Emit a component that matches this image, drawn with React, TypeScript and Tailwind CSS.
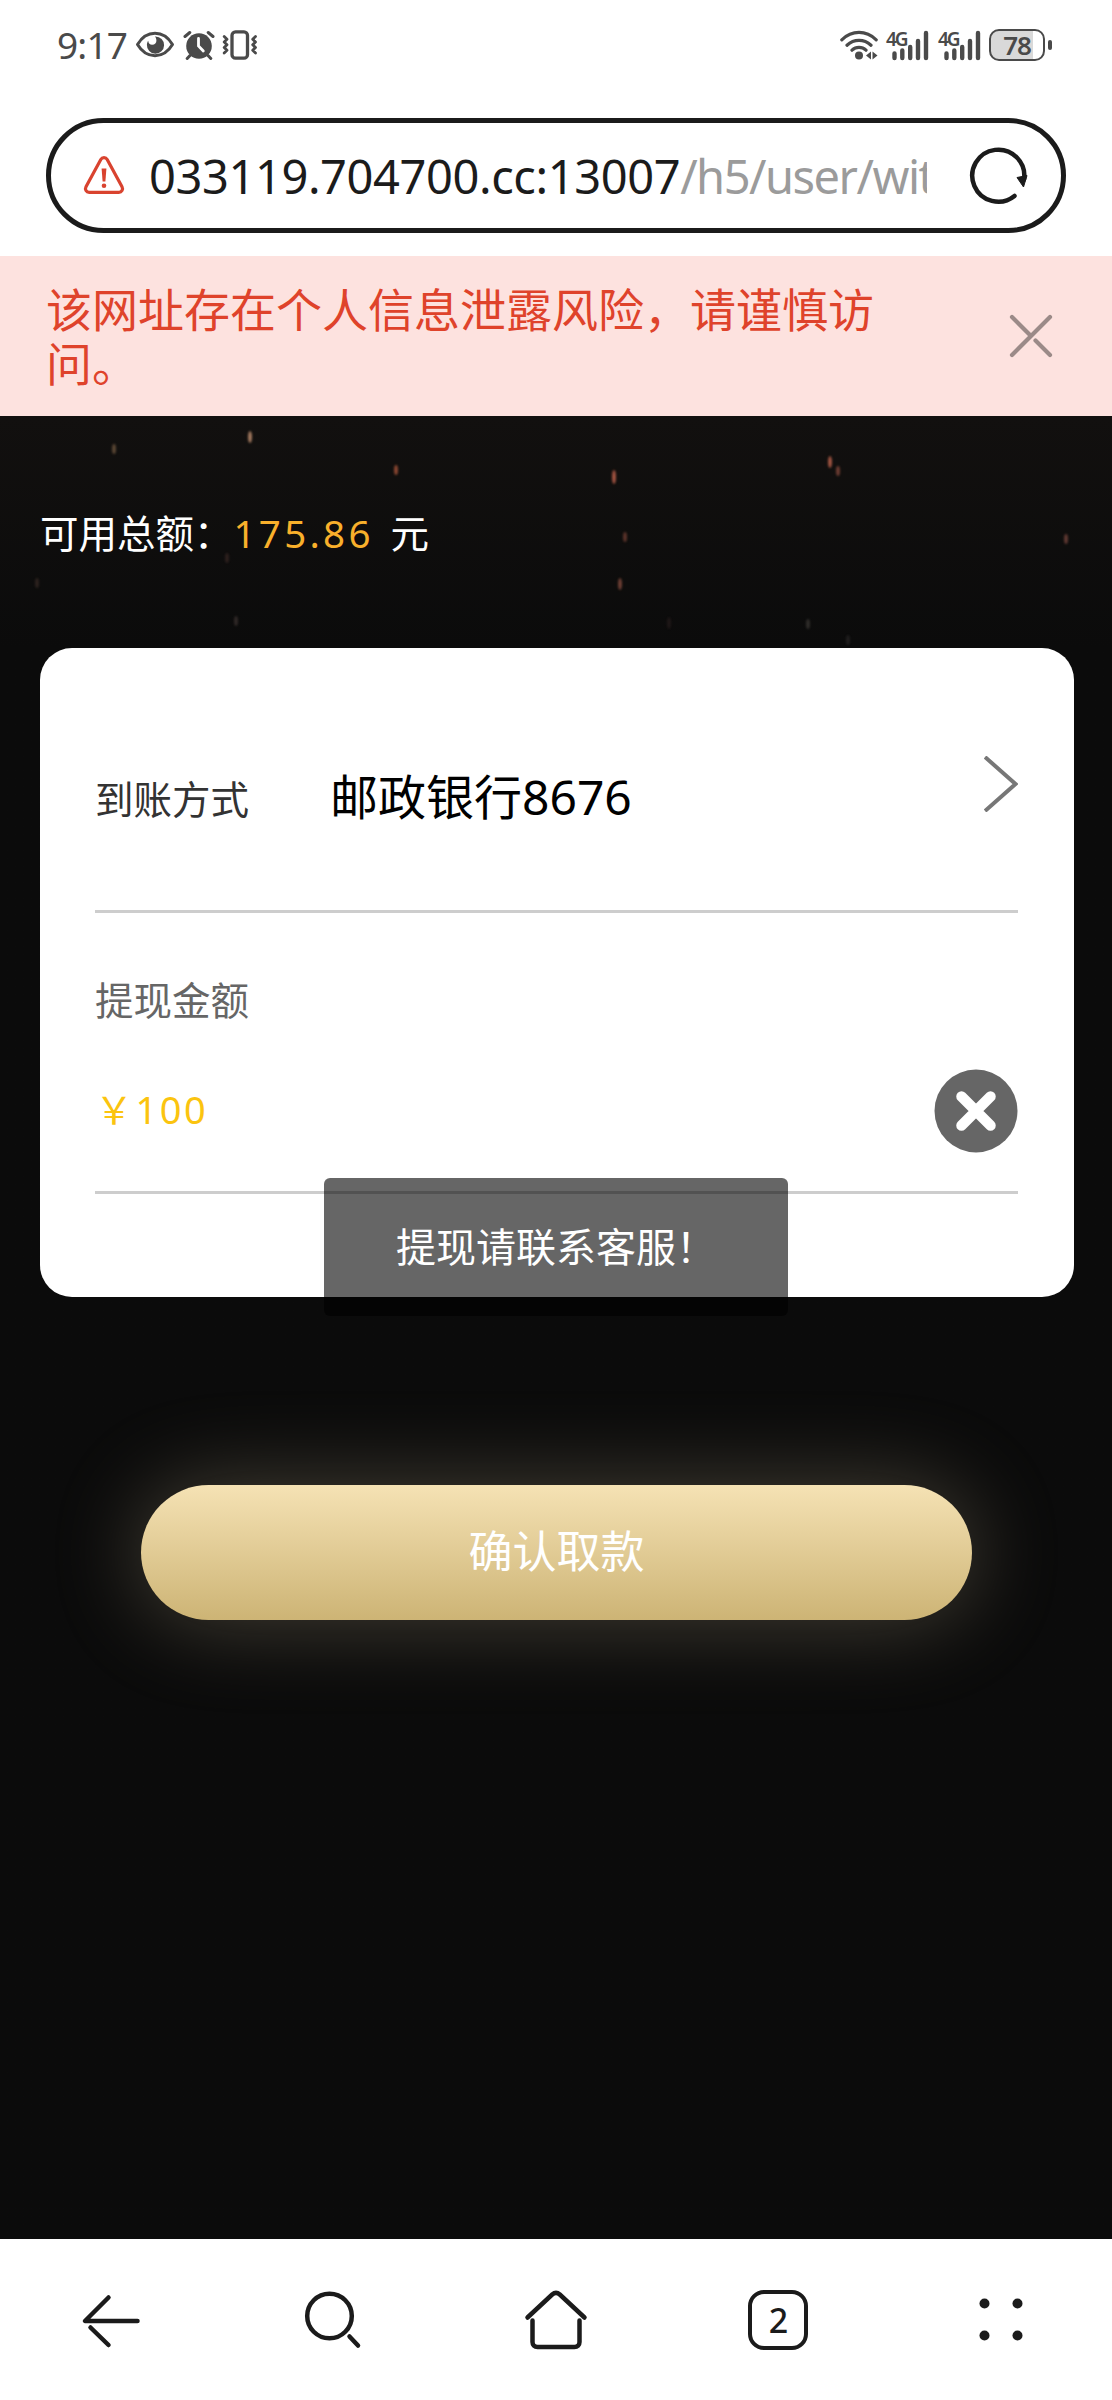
const sparks = [
  { x: 114, y: 33, r: 5, color: "#8a6a4c", opacity: 0.6 },
  { x: 250, y: 21, r: 6, color: "#b98a6c", opacity: 0.85 },
  { x: 396, y: 54, r: 5, color: "#b0583c", opacity: 0.75 },
  { x: 227, y: 142, r: 5, color: "#5c3a34", opacity: 0.4 },
  { x: 37, y: 167, r: 5, color: "#5c4038", opacity: 0.4 },
  { x: 236, y: 205, r: 5, color: "#5a4a46", opacity: 0.45 },
  { x: 614, y: 61, r: 7, color: "#bb5f48", opacity: 0.85 },
  { x: 625, y: 121, r: 5, color: "#8d4c3c", opacity: 0.6 },
  { x: 620, y: 168, r: 6, color: "#a05a48", opacity: 0.65 },
  { x: 669, y: 207, r: 6, color: "#4a3030", opacity: 0.3 },
  { x: 830, y: 46, r: 6, color: "#b8604a", opacity: 0.85 },
  { x: 838, y: 55, r: 5, color: "#a85a48", opacity: 0.6 },
  { x: 808, y: 208, r: 5, color: "#5a5450", opacity: 0.45 },
  { x: 848, y: 224, r: 5, color: "#3c3838", opacity: 0.4 },
  { x: 1066, y: 123, r: 5, color: "#94544a", opacity: 0.6 },
];

const EyeIcon = () => (
  <svg width="40" height="30" viewBox="0 0 40 30" fill="none">
    <path
      d="M2.5 14.5C7 7 13 3.3 20 3.3S33 7 37.5 14.5C33 22 27 25.7 20 25.7S7 22 2.5 14.5Z"
      stroke="#4a4a4a"
      strokeWidth="3"
      strokeLinejoin="round"
    />
    <path
      d="M20.5 6.5a8.6 8.6 0 1 1-8.6 8.2c.1-1.6.6-3 1.3-4 .2 2.4 1.7 4 3.9 4 2.8 0 4.4-2 4.3-4.3-.1-1.5-.5-2.8-1.5-3.9Z"
      fill="#4a4a4a"
    />
  </svg>
);

const AlarmIcon = () => (
  <svg width="32" height="30" viewBox="0 0 32 30" fill="none">
    <circle cx="16" cy="16" r="12.8" fill="#4a4a4a" />
    <path
      d="M2 6.5 6.8 2.5M30 6.5 25.2 2.5M7 25.5 4.2 28.5M25 25.5 27.8 28.5"
      stroke="#4a4a4a"
      strokeWidth="3"
      strokeLinecap="round"
    />
    <path
      d="M15.5 8.5v7.5l4.8 5"
      stroke="#fff"
      strokeWidth="2.8"
      strokeLinecap="round"
    />
  </svg>
);

const VibrateIcon = () => (
  <svg width="36" height="30" viewBox="0 0 36 30" fill="none" stroke="#4a4a4a">
    <rect x="10" y="1.8" width="15.5" height="26.4" rx="3.5" strokeWidth="3.3" />
    <path
      d="M2.2 6.5 5 9.2 2.2 12 5 14.7 2.2 17.5 5 20.3 2.2 23M33.5 6.5 30.7 9.2 33.5 12 30.7 14.7 33.5 17.5 30.7 20.3 33.5 23"
      strokeWidth="2.8"
      strokeLinecap="round"
      strokeLinejoin="round"
    />
  </svg>
);

const WifiIcon = () => (
  <svg width="38" height="31" viewBox="0 0 38 31" fill="none">
    <path
      d="M1.8 9.8C12 0 26 0 36.2 9.8M7 15.2c7-6.4 17-6.4 24 0M12 20.2c4-3.8 10-3.8 14 0"
      stroke="#4a4a4a"
      strokeWidth="3.2"
      strokeLinecap="round"
    />
    <circle cx="19" cy="25.5" r="4" fill="#4a4a4a" />
    <path d="M31 21.5v8l-5-4ZM32.5 21.5v8l5-4Z" fill="#4a4a4a" />
  </svg>
);

const SignalIcon = () => (
  <div className="relative h-[31px] w-[44px]">
    <span className="absolute -top-[2px] left-0 text-[19px] leading-[22px] font-semibold tracking-[-2px] text-[#4a4a4a]">
      4G
    </span>
    <svg
      className="absolute top-0 left-[6px]"
      width="37"
      height="31"
      viewBox="0 0 37 31"
      stroke="#4a4a4a"
      strokeWidth="4.4"
      strokeLinecap="round"
    >
      <path d="M2.5 23.5V28M10.3 20.5V28M18.2 17V28M26 11V28M34 3V28" />
    </svg>
  </div>
);

const Battery = () => (
  <div className="flex items-center gap-[3px]">
    <div className="flex h-[32px] w-[56px] items-center justify-center rounded-[10px] border-[2.5px] border-[#4a4a4a] bg-linear-to-r from-[#d9d9d9] from-80% to-white to-80% text-[26px] leading-[26px] font-semibold tracking-[-1px] text-[#4a4a4a]">
      78
    </div>
    <div className="h-[10px] w-[4px] rounded-full bg-[#4a4a4a]" />
  </div>
);

const StatusBar = () => (
  <div className="flex h-[90px] items-center justify-between pr-[60px] pl-[57px]">
    <div className="flex items-center text-[#4a4a4a]">
      <span className="w-[78px] text-[37px] leading-[40px] tracking-[-0.8px]">9:17</span>
      <EyeIcon />
      <div className="ml-[8px]">
        <AlarmIcon />
      </div>
      <div className="ml-[7px]">
        <VibrateIcon />
      </div>
    </div>
    <div className="flex items-center">
      <WifiIcon />
      <div className="ml-[8px] flex gap-[8px]">
        <SignalIcon />
        <SignalIcon />
      </div>
      <div className="ml-[7px]">
        <Battery />
      </div>
    </div>
  </div>
);

const AddressBar = () => (
  <div className="h-[166px] px-[46px] pt-[28px]">
    <div className="flex h-[115px] items-center rounded-full border-[5px] border-[#1b1b1b] pr-[32px] pl-[32px]">
      <svg width="42" height="42" viewBox="0 0 42 42" fill="none">
        <path
          d="M17.8 4.5a3.7 3.7 0 0 1 6.4 0L39 31.8c1.4 2.7-.2 5.5-3.2 5.5H6.2c-3 0-4.6-2.8-3.2-5.5Z"
          stroke="#d9432f"
          strokeWidth="3.2"
        />
        <path d="M18.6 13.5h4.8l-1 13h-2.8Z" fill="#d9432f" />
        <circle cx="21" cy="30.8" r="2.3" fill="#d9432f" />
      </svg>
      <div className="ml-[24px] w-[778px] overflow-hidden text-[47px] leading-[64px] tracking-[-0.4px] whitespace-nowrap text-[#1b1b1b]">
        033119.704700.cc:13007
        <span className="tracking-[-1.5px] text-[#9b9b9b]">/h5/user/wit</span>
      </div>
      <svg className="ml-auto" width="60" height="60" viewBox="0 0 60 60" fill="none">
        <path
          d="M45.5 50A26 26 0 1 1 55 33.5"
          stroke="#1b1b1b"
          strokeWidth="4.5"
          strokeLinecap="round"
        />
        <path d="M48 31.5 58 29.5 54.5 41Z" fill="#1b1b1b" stroke="#1b1b1b" strokeLinejoin="round" />
      </svg>
    </div>
  </div>
);

const RiskBanner = () => (
  <div className="flex h-[160px] items-center justify-between bg-[#fde2df] pr-[59px] pl-[46px]">
    <p className="w-[850px] text-[46px] leading-[54px] text-[#df432b]">
      该网址存在个人信息泄露风险，请谨慎访问。
    </p>
    <svg width="44" height="44" viewBox="0 0 44 44" stroke="#9b8a88" strokeWidth="4.2" strokeLinecap="round">
      <path d="M3 3 22 22M26.5 26.5 41 41M41 3 3 41" />
    </svg>
  </div>
);

const Sparks = () => (
  <svg className="absolute top-0 left-0" width="1112" height="232" viewBox="0 0 1112 232">
    <defs>
      <filter id="soft" x="-100%" y="-100%" width="300%" height="300%">
        <feGaussianBlur stdDeviation="1" />
      </filter>
    </defs>
    {sparks.map((s) => (
      <ellipse
        key={`${s.x}-${s.y}`}
        cx={s.x}
        cy={s.y}
        rx="2"
        ry={s.r}
        fill={s.color}
        opacity={s.opacity}
        filter="url(#soft)"
      />
    ))}
  </svg>
);

const WithdrawCard = () => (
  <div className="relative mr-[38px] ml-[40px] h-[649px] rounded-[32px] bg-white pr-[56px] pl-[55px]">
    <div className="flex h-[265px] items-center border-b-[3px] border-[#cdcdcd]">
      <span className="w-[235px] pt-[39px] text-[38.5px] leading-[48px] text-[#333]">到账方式</span>
      <span className="pt-[36px] text-[48px] leading-[60px] text-black">邮政银行8676</span>
      <svg className="mt-[9px] ml-auto" width="34" height="56" viewBox="0 0 34 56" fill="none">
        <path d="M1 1 31.5 28 1 55" stroke="#777" strokeWidth="4" />
      </svg>
    </div>
    <div className="h-[281px] border-b-[3px] border-[#cdcdcd] pt-[63px]">
      <p className="text-[38.5px] leading-[48px] text-[#666]">提现金额</p>
      <div className="mt-[45px] flex h-[84px] items-center justify-between">
        <span className="pb-[5px] text-[38px] leading-[48px] tracking-[2.5px] text-[#fbc40f]">￥100</span>
        <svg width="84" height="84" viewBox="0 0 84 84">
          <circle cx="42" cy="42" r="41.5" fill="#666" />
          <path d="M27.5 27.5 56.5 56.5M56.5 27.5 27.5 56.5" stroke="#fff" strokeWidth="10.5" strokeLinecap="round" />
        </svg>
      </div>
    </div>
    {/* toast */}
    <div className="absolute top-[530px] left-[284px] flex h-[138px] w-[464px] items-center justify-center rounded-[6px] bg-black/60 text-[40px] leading-[48px] text-white">
      提现请联系客服！
    </div>
  </div>
);

const TabBar = () => (
  <div className="grid h-[161px] grid-cols-5 items-center justify-items-center bg-white">
    <svg width="64" height="64" viewBox="0 0 64 64" stroke="#1b1b1b" strokeWidth="4.5" strokeLinecap="round" strokeLinejoin="round" fill="none">
      <path d="M29.5 9.5 6 33H58.5M11.5 39.5 29.5 57" />
    </svg>
    <svg width="64" height="64" viewBox="0 0 64 64" stroke="#1b1b1b" strokeWidth="4.5" strokeLinecap="round" fill="none">
      <circle cx="27.5" cy="28" r="22.3" />
      <path d="M47.5 48.5 56 57.5" />
    </svg>
    <svg width="64" height="64" viewBox="0 0 64 64" stroke="#1b1b1b" strokeWidth="4.5" strokeLinecap="round" fill="none">
      <path d="M3.5 29.5 28.2 6.5c2.3-2 5.3-2 7.6 0L60.5 29.5" />
      <path d="M8.5 32.5V54c0 3 2 5 5 5h37c3 0 5-2 5-5V32.5" />
    </svg>
    <div className="flex h-[60px] w-[60px] items-center justify-center rounded-[16px] border-[4.5px] border-[#1b1b1b] text-[34px] leading-[40px] font-medium text-[#1b1b1b]">
      2
    </div>
    <svg width="64" height="64" viewBox="0 0 64 64" fill="#1b1b1b">
      <circle cx="15.5" cy="15.5" r="5" />
      <circle cx="48.5" cy="15.5" r="5" />
      <circle cx="15.5" cy="47.5" r="5" />
      <circle cx="48.5" cy="47.5" r="5" />
    </svg>
  </div>
);

export default function App() {
  return (
    <div className="flex h-[2400px] w-[1112px] flex-col overflow-hidden bg-white font-['Noto_Sans','Noto_Sans_CJK_SC',sans-serif]">
      <StatusBar />
      <AddressBar />
      <RiskBanner />
      <main className="relative flex-1 bg-[#0b0b0b] bg-linear-to-b from-[#12100f] to-[#0b0b0b] to-[232px]">
        <Sparks />
        <div className="flex h-[232px] items-center pt-[2px] pl-[40px] text-[38.5px] leading-[48px] text-white">
          <span>可用总额：</span>
          <span className="ml-[1px] w-[157px] tracking-[3.3px] text-[#f9b02b]">175.86</span>
          <span>元</span>
        </div>
        <WithdrawCard />
        <button className="mx-[141px] mt-[188px] block h-[135px] w-[831px] rounded-full bg-linear-to-b from-[#f5e2b4] to-[#cdb475] pb-[4px] text-[44px] leading-[56px] text-white shadow-[0_0_90px_rgba(245,226,180,0.26)]">
          确认取款
        </button>
      </main>
      <TabBar />
    </div>
  );
}
